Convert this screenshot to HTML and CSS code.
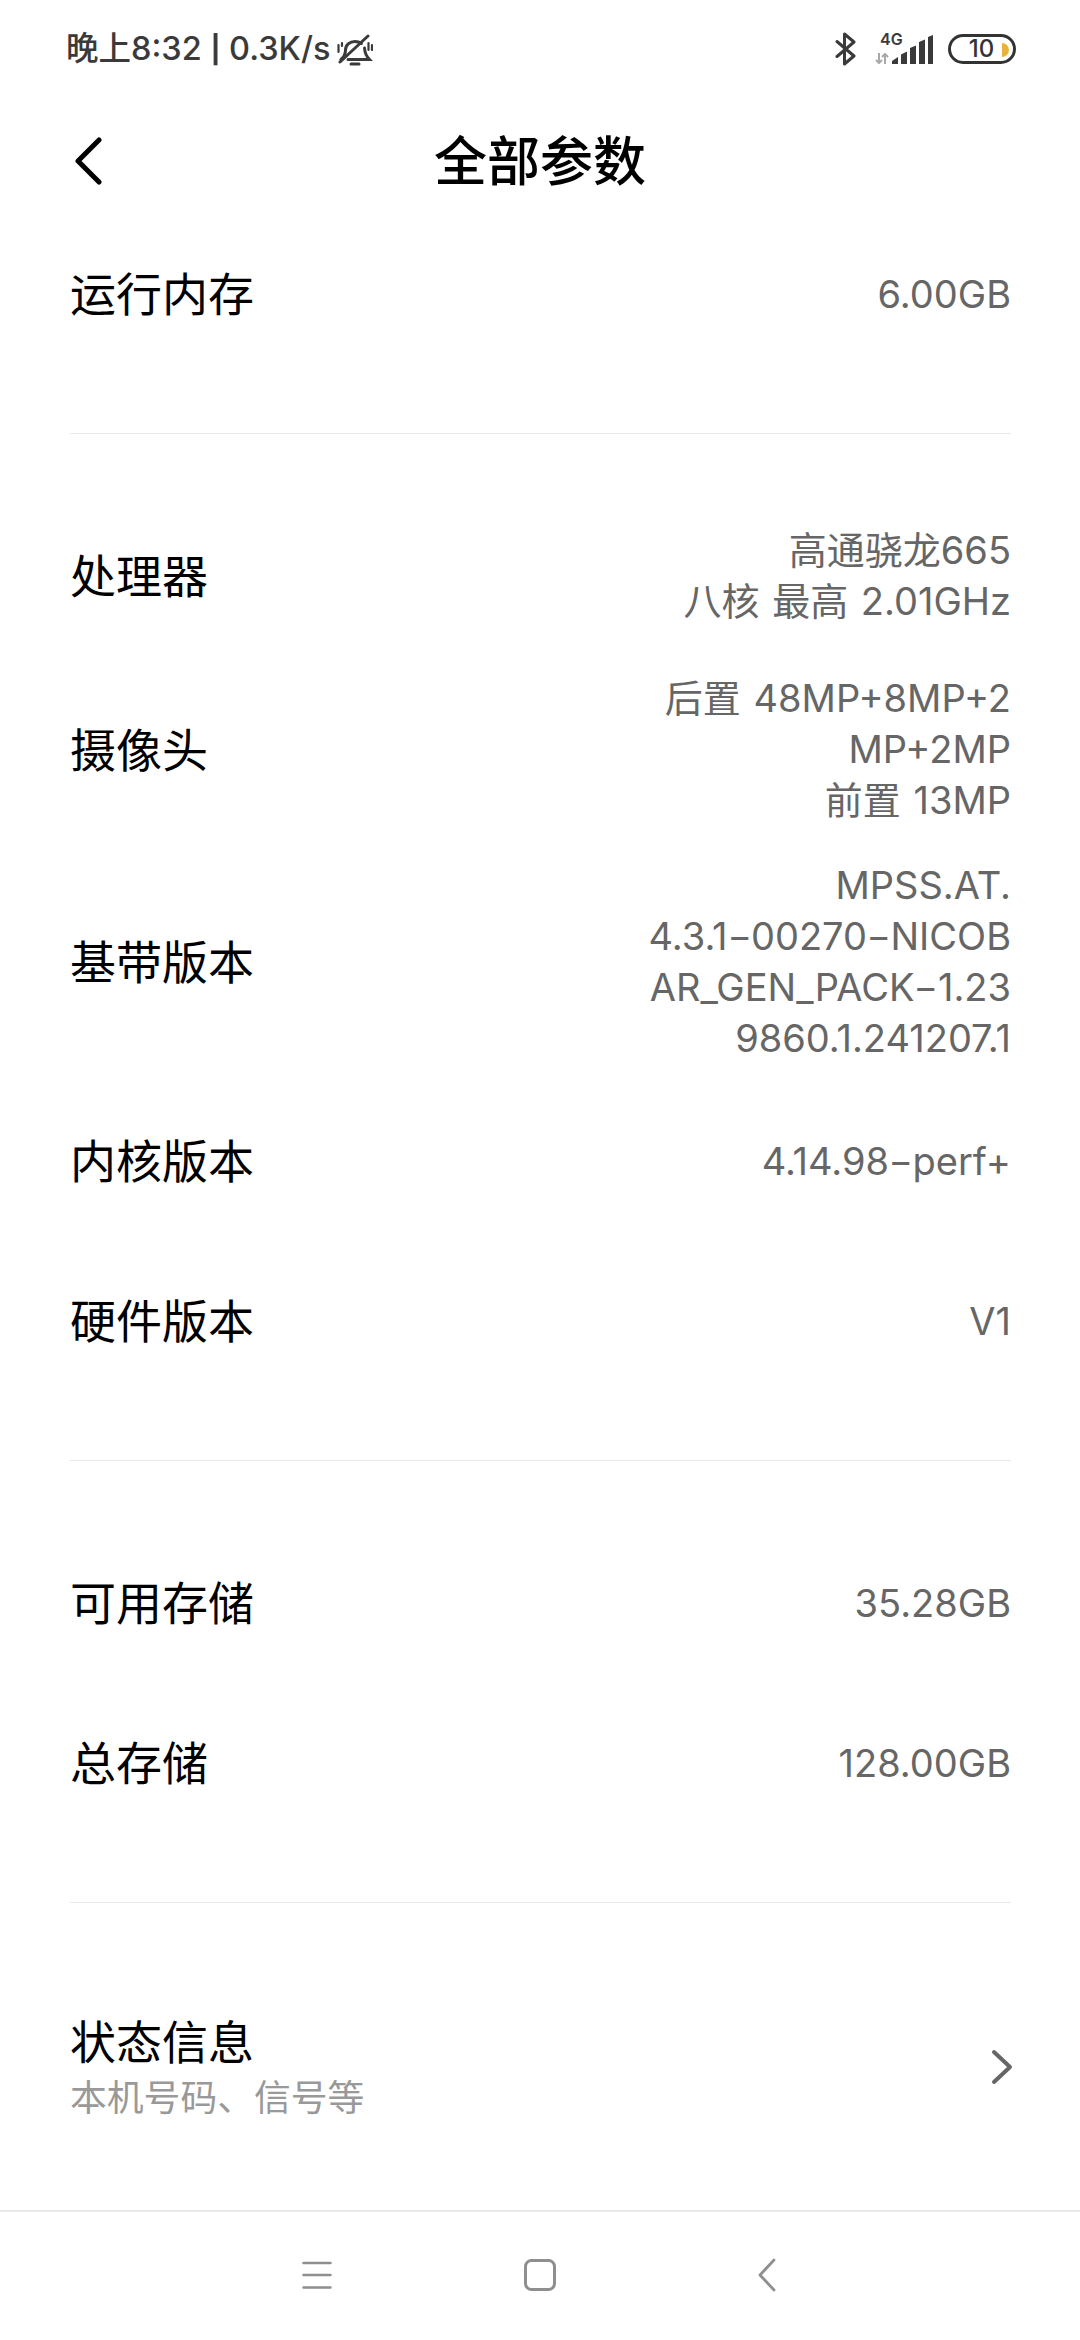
FILE: index.html
```html
<!DOCTYPE html>
<html lang="zh-CN">
<head>
<meta charset="utf-8">
<title>全部参数</title>
<link rel="stylesheet" href="styles.css">
</head>
<body>
<div class="phone">
  <div class="status">
    <div class="status-left">
      <span class="clock">晚上8:32 <span class="pipe">|</span> 0.3K/s</span>
      <svg class="bell" width="36" height="34" viewBox="0 0 36 34" fill="none" stroke="#3a3a3a" stroke-width="3" stroke-linecap="round">
        <path d="M4 25.500c3-2.500 4.500-5 4.500-9.500 0-5 4-8.500 9.500-8.500 2.500 0 4.700.8 6.300 2M27.500 14c.3 4.500 1.500 8 5 11.500H11"/>
        <path d="M3 28 31 2"/>
        <path d="M14 30h8" stroke-width="3"/>
        <path d="M1.500 11v7M5 9v3M31.500 9v7M35 11v5" stroke-width="2.200"/>
      </svg>
    </div>
    <div class="status-right">
      <svg class="bt" width="22" height="34" viewBox="0 0 22 34" fill="none" stroke="#3a3a3a" stroke-width="3" stroke-linejoin="round" stroke-linecap="round">
        <path d="M2 9.500 19 24 9.500 32V2L19 10 2 24.500"/>
      </svg>
      <div class="net">
        <span class="net-type">4G</span>
        <svg class="arrows" width="14" height="11" viewBox="0 0 14 11" fill="none" stroke="#a8a8a8" stroke-width="2">
          <path d="M4 0v10M1 7l3 3 3-3M10 11V1M7 4l3-3 3 3"/>
        </svg>
      </div>
      <svg class="signal" width="41" height="29" viewBox="0 0 41 29" fill="#3a3a3a">
        <path d="M0 29v-3l6-4v7zM9 29V19.500l6-3V29zM18 29V13l6-2.500V29zM27 29V7l6-2.500V29zM36 29V2l5-2v29z"/>
      </svg>
      <div class="battery">
        <span class="battery-num">10</span>
        <span class="battery-level"></span>
      </div>
    </div>
  </div>

  <header class="header">
    <svg class="back" width="32" height="48" viewBox="0 0 32 48" fill="none" stroke="#000" stroke-width="5" stroke-linecap="round" stroke-linejoin="round">
      <path d="M27 3 6 24l21 21"/>
    </svg>
    <h1 class="title">全部参数</h1>
  </header>

  <main class="content">
    <section class="group">
      <div class="row"><span class="label">运行内存</span><span class="value">6.00GB</span></div>
    </section>
    <section class="group">
      <div class="row"><span class="label">处理器</span><span class="value">高通骁龙665<br>八核 最高 2.01GHz</span></div>
      <div class="row"><span class="label">摄像头</span><span class="value">后置 48MP+8MP+2<br>MP+2MP<br>前置 13MP</span></div>
      <div class="row"><span class="label">基带版本</span><span class="value">MPSS.AT.<br>4.3.1<span class="dash">-</span>00270<span class="dash">-</span>NICOB<br>AR_GEN_PACK<span class="dash">-</span>1.23<br>9860.1.241207.1</span></div>
      <div class="row"><span class="label">内核版本</span><span class="value">4.14.98<span class="dash">-</span>perf+</span></div>
      <div class="row"><span class="label">硬件版本</span><span class="value">V1</span></div>
    </section>
    <section class="group">
      <div class="row"><span class="label">可用存储</span><span class="value">35.28GB</span></div>
      <div class="row"><span class="label">总存储</span><span class="value">128.00GB</span></div>
    </section>
    <section class="group">
      <div class="row row-link">
        <div class="stack">
          <span class="label">状态信息</span>
          <span class="sub">本机号码、信号等</span>
        </div>
        <svg class="chevron" width="24" height="36" viewBox="0 0 24 36" fill="none" stroke="#666" stroke-width="4" stroke-linecap="round" stroke-linejoin="round">
          <path d="M4 3l16 15L4 33"/>
        </svg>
      </div>
    </section>
  </main>

  <nav class="nav">
    <svg class="nav-menu" width="30" height="28" viewBox="0 0 30 28" fill="none" stroke="#8f8f8f" stroke-width="2.500" stroke-linecap="round">
      <path d="M1.500 2h27M1.500 14h27M1.500 26.500h27"/>
    </svg>
    <svg class="nav-home" width="32" height="32" viewBox="0 0 32 32" fill="none" stroke="#8f8f8f" stroke-width="3">
      <rect x="1.500" y="1.500" width="29" height="29" rx="6"/>
    </svg>
    <svg class="nav-back" width="18" height="34" viewBox="0 0 18 34" fill="none" stroke="#8f8f8f" stroke-width="2.800" stroke-linecap="round" stroke-linejoin="round">
      <path d="M16 2 2 17l14 15"/>
    </svg>
  </nav>
</div>
</body>
</html>
```
FILE: styles.css
```css
* { box-sizing: border-box; }
html, body { margin: 0; padding: 0; background: #fff; }
body { font-family: "Inter", "Noto Sans CJK SC", sans-serif; }
.phone { width: 1080px; height: 2340px; display: flex; flex-direction: column; overflow: hidden; }

.status { height: 108px; padding: 31px 64px 0 66px; display: flex; justify-content: space-between; align-items: flex-start; color: #3a3a3a; }
.status-left { display: flex; align-items: center; gap: 7px; height: 38px; }
.clock { font-size: 32.500px; font-weight: 500; line-height: 38px; white-space: nowrap; }
.pipe { font-size: 27px; font-weight: 700; position: relative; top: -1px; }
.bell { margin-top: 2px; }
.status-right { display: flex; align-items: flex-start; }
.bt { margin: 1px 18px 0 0; }
.net { width: 17px; height: 32px; display: flex; flex-direction: column; gap: 7px; }
.net-type { font: 600 16px/14px "Inter", sans-serif; color: #3a3a3a; margin: 1px 0 0 5px; white-space: nowrap; }
.arrows { flex: none; }
.signal { margin: 4px 15px 0 0; }
.battery { position: relative; width: 68px; height: 30px; margin-top: 3px; border: 3.500px solid #333; border-radius: 15px; display: flex; align-items: center; justify-content: center; }
.battery-num { font: 500 24px/1 "Inter", sans-serif; color: #333; margin-right: 1px; }
.battery-level { position: absolute; right: 4px; top: 6px; width: 7px; height: 14px; background: #e9b23c; border-radius: 0 7px 7px 0; }

.header { height: 106px; padding-bottom: 6px; position: relative; display: flex; align-items: center; justify-content: center; }
.back { position: absolute; left: 72px; top: 29px; }
.title { margin: 0; font-size: 53px; font-weight: 500; line-height: 70px; color: #000; font-family: "Noto Sans CJK SC", sans-serif; }

.content { flex: 1; padding: 0 69px 0 70px; }
.group { padding: 0 0 59px; margin-bottom: 62px; border-bottom: 1px solid #e9e9e9; }
.group:last-child { border-bottom: 0; margin-bottom: 0; padding-bottom: 0; }
.row { min-height: 160px; padding: 17px 0; display: flex; align-items: center; justify-content: space-between; gap: 40px; }
.label { font-size: 46px; line-height: 60px; margin-bottom: 6px; color: #000; white-space: nowrap; font-family: "Noto Sans CJK SC", sans-serif; }
.value { font-size: 38px; line-height: 51px; color: #666; text-align: right; white-space: nowrap; word-spacing: 2px; }
.dash { display: inline-block; transform: scaleX(1.4); margin: 0 3px; }
.row-link { min-height: 200px; padding: 21px 0 17px; }
.stack { display: flex; flex-direction: column; }
.stack .label { line-height: 57px; margin-bottom: 0; }
.sub { font-size: 36.800px; line-height: 55px; color: #999; white-space: nowrap; font-family: "Noto Sans CJK SC", sans-serif; }
.chevron { margin-right: -3px; }

.nav { height: 130px; border-top: 2px solid #e8e8e8; padding: 0 0 2px 302px; display: flex; align-items: center; }
.nav-home { margin-left: 192px; }
.nav-back { margin-left: 202px; }
```
